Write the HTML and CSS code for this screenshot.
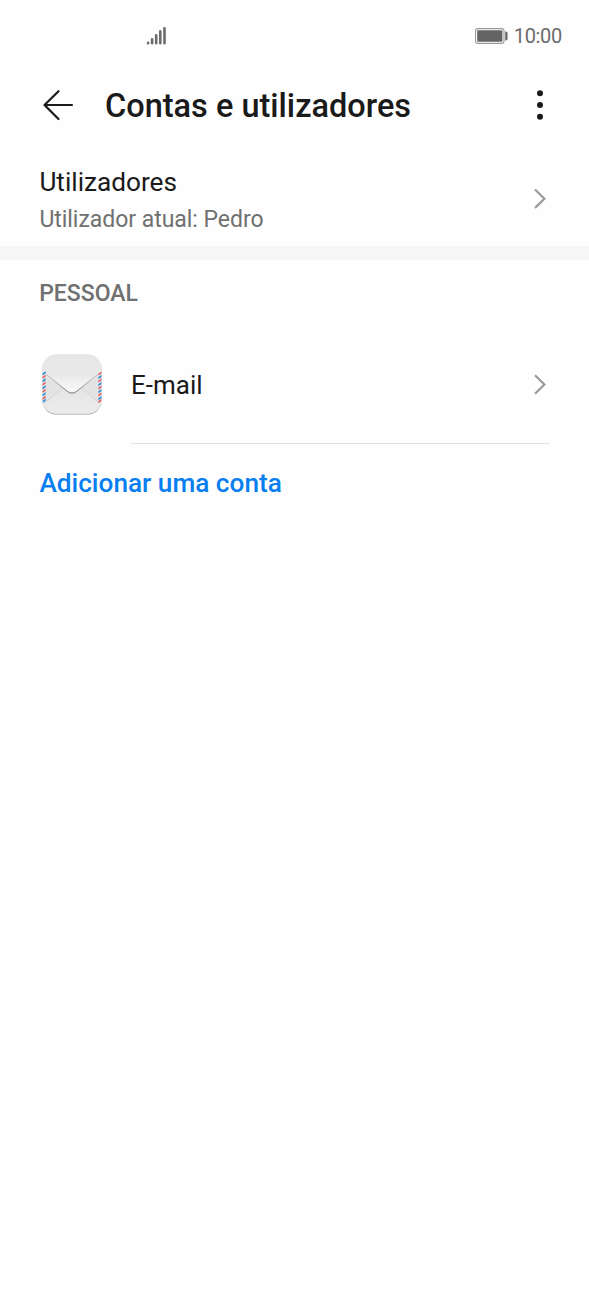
FILE: index.html
```html
<!DOCTYPE html>
<html lang="pt">
<head>
<meta charset="utf-8">
<title>Contas e utilizadores</title>
<link rel="stylesheet" href="styles.css">
</head>
<body>
<div class="status">
  <svg class="signal" width="22" height="20" viewBox="0 0 22 20" stroke="#6b6b6b" stroke-width="2.6" stroke-linecap="round"><path d="M2.1 17.3v-.6M6.1 17.3v-4.1M10.2 17.3v-8.1M14.3 17.3V5.4M18.5 17.3V2.2"/></svg>
  <svg class="battery" width="35" height="18" viewBox="0 0 35 18"><rect x="1.6" y="1.6" width="28.4" height="14.8" rx="2.4" fill="none" stroke="#999" stroke-width="1.1"/><rect x="3.2" y="3.2" width="25.2" height="11.6" rx=".8" fill="#646464"/><path d="M31.2 4.6h.8a1.6 1.6 0 0 1 1.6 1.6v5.6a1.6 1.6 0 0 1-1.6 1.6h-.8z" fill="#6b6b6b"/></svg>
  <span class="time">10:00</span>
</div>
<header class="header">
  <svg class="back" width="32" height="32" viewBox="0 0 32 32" fill="none" stroke="#1a1a1a" stroke-width="2.2" stroke-linecap="round" stroke-linejoin="round"><path d="M16.5 2.2 2.5 16l14 14M2.5 16H30"/></svg>
  <h1 class="title">Contas e utilizadores</h1>
  <svg class="more" width="8" height="32" viewBox="0 0 8 32" fill="#1a1a1a"><circle cx="4" cy="4.2" r="3"/><circle cx="4" cy="16" r="3"/><circle cx="4" cy="27.8" r="3"/></svg>
</header>
<main>
  <div class="row users">
    <div class="labels">
      <div class="name">Utilizadores</div>
      <div class="sub">Utilizador atual: Pedro</div>
    </div>
    <svg class="chevron" width="14" height="22" viewBox="0 0 14 22"><path d="m2 1.5 9.4 9.2L2 19.9"/></svg>
  </div>
  <div class="band"></div>
  <h2 class="section">PESSOAL</h2>
  <div class="row account">
    <svg class="mail" width="66" height="66" viewBox="0 0 66 66">
      <defs>
        <linearGradient id="base" x2="0" y2="1"><stop stop-color="#e5e5e5"/><stop offset=".6" stop-color="#e3e3e3"/><stop offset="1" stop-color="#e9e9e9"/></linearGradient>
        <linearGradient id="flap" x2="0" y2="1"><stop stop-color="#e6e6e6"/><stop offset=".55" stop-color="#e9e9e9"/><stop offset="1" stop-color="#fafafa"/></linearGradient>
        <linearGradient id="front" x2="0" y2="1"><stop stop-color="#e4e4e4"/><stop offset="1" stop-color="#ececec"/></linearGradient>
        <filter id="soft" x="-20%" y="-20%" width="140%" height="150%"><feGaussianBlur stdDeviation=".7"/></filter>
        <clipPath id="shape"><rect x="3.5" y="2.5" width="59" height="59" rx="14"/></clipPath>
      </defs>
      <rect x="3.5" y="3.6" width="59" height="59.2" rx="14" fill="#b8b8b8" filter="url(#soft)"/>
      <g clip-path="url(#shape)">
        <path fill="url(#base)" d="M3 2h60v60H3z"/>
        <path fill="url(#front)" d="M3 53 24 34h18l21 19v9H3z"/>
        <path fill="none" stroke="#d0d0d0" stroke-width=".9" d="m6 50.5 17-14.500M60 50.500 43 36"/>
        <path fill="#999" filter="url(#soft)" d="m6.500 22 21.500 17.700q5 4 10 0L59.500 22z"/>
        <path fill="url(#flap)" d="M3 2h60v17L37.500 38.700q-4.500 3.200-9 0L3 19z"/>
        <path fill="#f4f4f4" d="M3 19h3.700v30.500H3zM59.300 19H63v30.500h-3.700z"/>
        <path fill="#3d93d0" d="m3 21.500 3.700-2.400v2.300L3 23.800zm0 7 3.700-2.400v2.300L3 30.800zm0 7 3.700-2.400v2.300L3 37.800zm0 7 3.700-2.400v2.300L3 44.800zm0 6.500 3.700-2.400v2.300L3 51.300zM59.300 25l3.700-2.400v2.300l-3.700 2.400zm0 7 3.700-2.400v2.300l-3.700 2.400zm0 7 3.700-2.400v2.300l-3.700 2.400zm0 7 3.700-2.400v2.300l-3.700 2.400z"/>
        <path fill="#df6668" d="m3 25 3.700-2.400v2.200L3 27.200zm0 7 3.700-2.400v2.200L3 34.200zm0 7 3.700-2.400v2.200L3 41.200zm0 7 3.700-2.400v2.200L3 48.200zM59.300 21.500l3.700-2.400v2.200l-3.700 2.400zm0 7 3.700-2.400v2.200l-3.700 2.400zm0 7 3.700-2.400v2.200l-3.700 2.400zm0 7 3.700-2.400v2.200l-3.700 2.400zm0 6.500 3.700-2.400v2.200l-3.700 2.400z"/>
      </g>
    </svg>
    <div class="name">E-mail</div>
    <svg class="chevron" width="14" height="22" viewBox="0 0 14 22"><path d="m2 1.3 9.4 9.2L2 19.7"/></svg>
  </div>
  <div class="rule"></div>
  <div class="add">Adicionar uma conta</div>
</main>
</body>
</html>
```
FILE: styles.css
```css
body {
  margin: 0;
  min-height: 1309px;
  background: #fefefe;
  color: #1a1a1a;
  font-family: Roboto, sans-serif;
}

svg {
  display: block;
  flex: none;
}

.status {
  display: flex;
  align-items: center;
  height: 72px;
  padding: 0 27px 0 146px;
}

.battery {
  margin-left: auto;
}

.time {
  margin-left: 5px;
  color: #6b6b6b;
  font-size: 20px;
  letter-spacing: -0.3px;
  line-height: 24px;
}

.header {
  display: flex;
  align-items: center;
  height: 66px;
  padding: 0 45px 0 42px;
}

.title {
  margin: 2px 0 0 31px;
  font-size: 32.5px;
  font-weight: 500;
  line-height: 40px;
}

.more {
  margin-left: auto;
}

.row {
  display: flex;
  align-items: center;
  box-sizing: border-box;
  padding-right: 42px;
}

.users {
  height: 108px;
  padding: 13px 42px 0 39.4px;
}

.name {
  font-size: 26.2px;
  line-height: 36px;
}

.sub {
  margin-top: 2px;
  color: #707070;
  font-size: 23px;
  letter-spacing: -0.04px;
  line-height: 36px;
}

.labels {
  height: 73px;
  margin-top: 4px;
}

.chevron {
  margin-left: auto;
  fill: none;
  stroke: #9a9a9a;
  stroke-width: 2.2;
}

.band {
  height: 14px;
  background: #f6f6f6;
}

.section {
  margin: 19px 0 0 39.2px;
  color: #707070;
  font-size: 23px;
  font-weight: 500;
  line-height: 30px;
}

.account {
  height: 117px;
  margin-top: 17px;
  padding-left: 39px;
}

.account .name {
  margin-left: 26px;
  font-size: 26px;
}

.rule {
  height: 1px;
  margin: 0 39px 0 131px;
  background: #e2e2e2;
}

.add {
  margin: 23px 0 0 39.4px;
  color: #087ef0;
  font-size: 26.2px;
  font-weight: 500;
  line-height: 32px;
}
```
